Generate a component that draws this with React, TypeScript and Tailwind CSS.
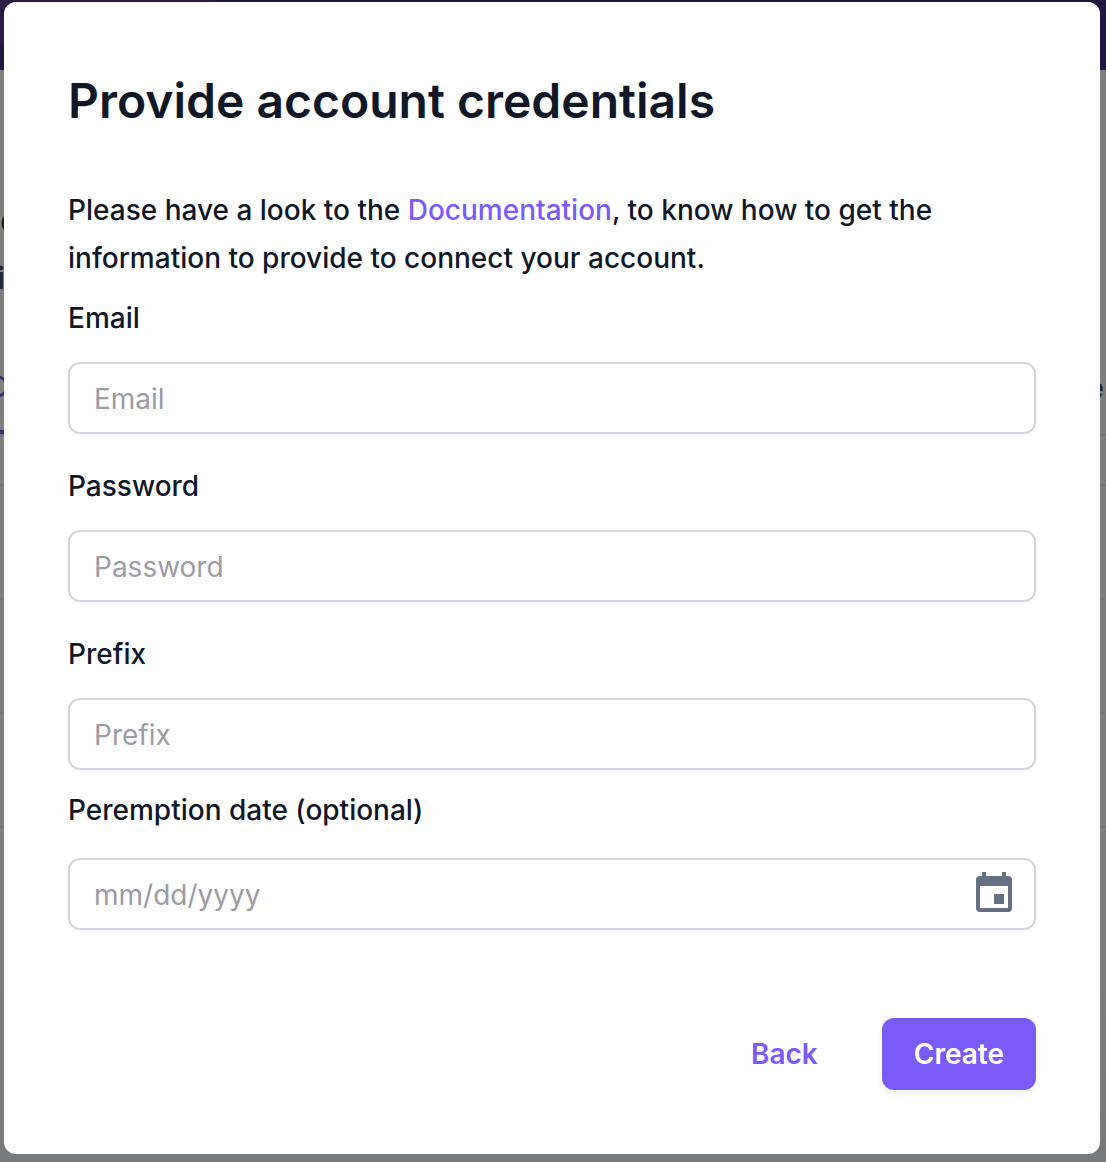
import React from "react";

function Field({ id, label, type = "text", className = "" }: { id: string; label: string; type?: string; className?: string }) {
  return (
    <div className={className}>
      <label htmlFor={id} className="block leading-12">
        {label}
      </label>
      <input
        id={id}
        type={type}
        placeholder={label}
        className="mt-5 block h-18 w-full rounded-xl border-2 border-[#d0d5dd] bg-white px-6 pt-0.5 font-normal shadow-[0_2px_4px_#1018280d] placeholder:text-[#9b9ba3] focus:outline-none"
      />
    </div>
  );
}

function CalendarIcon() {
  return (
    <svg viewBox="0 0 36 40" className="h-10 w-9" fill="#667085" aria-hidden="true">
      <path
        fillRule="evenodd"
        d="M6 0h4v4h16V0h4v4h2a4 4 0 0 1 4 4v28a4 4 0 0 1-4 4H4a4 4 0 0 1-4-4V8a4 4 0 0 1 4-4h2zM4 14v22h28V14z"
      />
      <path d="M18 22h10v10H18z" />
    </svg>
  );
}

function Backdrop() {
  return (
    <div aria-hidden="true" className="absolute inset-0 flex flex-col overflow-hidden bg-[#7e7f7c]">
      <div className="h-[70px] shrink-0 bg-[#21163f]">
        <div className="h-11 w-[216px] bg-[#2c1b44]" />
      </div>
      <div className="mt-[120px] h-14 text-4xl leading-[60px] font-semibold text-[#1b1b20]">o</div>
      <div className="-ml-[3px] h-16 text-3xl leading-[64px] font-semibold text-[#202531]">i</div>
      <div className="mt-[50px] flex h-[76px] justify-between border-b-2 border-[#757674]">
        <div className="-ml-3 h-[74px] border-b-4 border-[#3c2c7c] pr-8 leading-[54px] text-[#3c2c7c]">C</div>
        <div className="pr-[2px] leading-[56px] text-[#202736]">e</div>
      </div>
      <div className="h-[50px] shrink-0 border-b-2 border-[#757674]" />
      <div className="h-[114px] shrink-0 border-b-2 border-[#757674]" />
      <div className="h-[114px] shrink-0 border-b-2 border-[#757674]" />
      <div className="h-[114px] shrink-0 border-b-2 border-[#757674]" />
      <div className="flex-1 bg-linear-to-b from-[#7e7f7c] to-[#78797b]" />
    </div>
  );
}

export default function App() {
  return (
    <div className="relative min-h-screen pt-[2px] pr-[6px] pb-2 pl-1 font-['Inter',sans-serif] text-[28px] font-medium text-[#101828]">
      <Backdrop />
      <form
        role="dialog"
        aria-labelledby="dialog-title"
        onSubmit={(event) => event.preventDefault()}
        className="relative rounded-xl bg-white p-16"
      >
        <h1 id="dialog-title" className="text-5xl leading-[70px] font-semibold">
          Provide account credentials
        </h1>
        <p className="mt-[50px] leading-12">
          Please have a look to the{" "}
          <a href="#documentation" className="text-[#7a5af8]">
            Documentation
          </a>
          , to know how to get the information to provide to connect your account.
        </p>
        <Field id="email" label="Email" type="email" className="mt-3" />
        <Field id="password" label="Password" type="password" className="mt-7" />
        <Field id="prefix" label="Prefix" className="mt-7" />
        <div className="mt-4">
          <label htmlFor="peremption" className="block leading-12">
            Peremption date (optional)
          </label>
          <div className="mt-6 flex h-18 items-center rounded-xl border-2 border-[#d0d5dd] bg-white pr-[22px] pl-6 shadow-[0_2px_4px_#1018280d]">
            <input
              id="peremption"
              type="text"
              placeholder="mm/dd/yyyy"
              className="min-w-0 flex-1 pt-0.5 font-normal placeholder:text-[#9b9ba3] focus:outline-none"
            />
            <button type="button" aria-label="Choose date" className="mb-1">
              <CalendarIcon />
            </button>
          </div>
        </div>
        <div className="mt-22 flex items-center justify-end gap-8">
          <button type="button" className="h-18 px-8 font-semibold text-[#7a5af8]">
            Back
          </button>
          <button
            type="submit"
            className="h-18 rounded-xl bg-[#7a5af8] px-8 font-semibold text-white shadow-[0_4px_8px_#1018280f]"
          >
            Create
          </button>
        </div>
      </form>
    </div>
  );
}
